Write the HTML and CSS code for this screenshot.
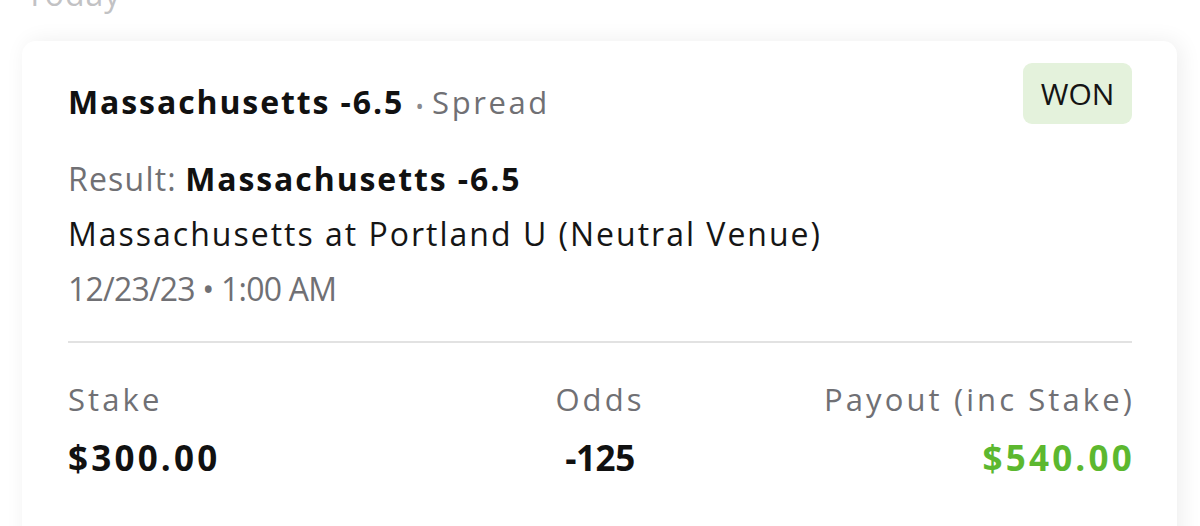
FILE: index.html
```html
<!DOCTYPE html>
<html>
<head>
<meta charset="utf-8">
<link rel="stylesheet" href="styles.css">
</head>
<body>
<div class="page">
  <div class="day">Today</div>
  <div class="card">
    <div class="head">
      <div class="title"><span class="pick">Massachusetts -6.5</span> <span class="dot">•</span> <span class="market">Spread</span></div>
      <div class="badge">WON</div>
    </div>
    <div class="line result"><span class="muted">Result:</span> <b>Massachusetts -6.5</b></div>
    <div class="line event">Massachusetts at Portland U (Neutral Venue)</div>
    <div class="line date">12/23/23 • 1:00 AM</div>
    <div class="divider"></div>
    <div class="stats">
      <div class="stat left">
        <div class="label">Stake</div>
        <div class="value">$300.00</div>
      </div>
      <div class="stat mid">
        <div class="label">Odds</div>
        <div class="value odds">-125</div>
      </div>
      <div class="stat right">
        <div class="label">Payout (inc Stake)</div>
        <div class="value green">$540.00</div>
      </div>
    </div>
  </div>
</div>
</body>
</html>
```
FILE: styles.css
```css
html, body {
  margin: 0;
  padding: 0;
  background: #ffffff;
  overflow: hidden;
}
body {
  font-family: "Open Sans", "Noto Sans", sans-serif;
  color: #111;
}
.page {
  width: 1200px;
  height: 526px;
  overflow: hidden;
}
.day {
  margin-top: -21px;
  margin-left: 26px;
  margin-bottom: 32px;
  font-size: 32px;
  line-height: 30px;
  letter-spacing: 1px;
  color: #c2c2c4;
}
.card {
  margin-left: 22px;
  width: 1155px;
  height: 520px;
  box-sizing: border-box;
  padding: 22px 45px 0 46px;
  background: #fff;
  border-radius: 14px;
  box-shadow: 4px 0 22px rgba(0, 0, 0, 0.07);
}
.head {
  display: flex;
  justify-content: space-between;
  align-items: flex-start;
}
.title {
  margin-top: 19px;
  line-height: 40px;
  font-size: 32px;
  white-space: nowrap;
}
.pick {
  font-weight: 700;
  color: #111;
  letter-spacing: 1.9px;
}
.dot {
  color: #8a8a8e;
  font-size: 22px;
  margin-left: 3px;
}
.market {
  color: #707074;
  font-size: 31px;
  letter-spacing: 2.6px;
}
.badge {
  width: 109px;
  height: 61px;
  border-radius: 9px;
  background: #e4f2dc;
  display: flex;
  align-items: center;
  justify-content: center;
  font-size: 30px;
  color: #141414;
}
.line {
  font-size: 32px;
  line-height: 55px;
  white-space: nowrap;
}
.result {
  margin-top: 26px;
}
.result .muted {
  letter-spacing: 1.2px;
}
.result b {
  font-weight: 700;
  color: #111;
  letter-spacing: 1.9px;
}
.muted, .date {
  color: #707074;
}
.event {
  color: #151515;
  letter-spacing: 2px;
}
.date {
  letter-spacing: -0.8px;
}
.divider {
  margin-top: 25px;
  height: 2px;
  background: #e2e2e2;
}
.stats {
  margin-top: 31px;
  display: grid;
  grid-template-columns: 1fr 1fr 1fr;
}
.label {
  font-size: 31px;
  line-height: 50px;
  color: #707074;
  letter-spacing: 3.1px;
  white-space: nowrap;
}
.value {
  margin-top: 9px;
  font-size: 35px;
  line-height: 50px;
  font-weight: 700;
  color: #111;
  letter-spacing: 3.2px;
  white-space: nowrap;
}
.value.odds {
  letter-spacing: -0.4px;
}
.mid {
  text-align: center;
}
.right {
  text-align: right;
}
.right .label, .right .value {
  margin-right: -3px;
}
.green {
  color: #5cb82f;
}
```
